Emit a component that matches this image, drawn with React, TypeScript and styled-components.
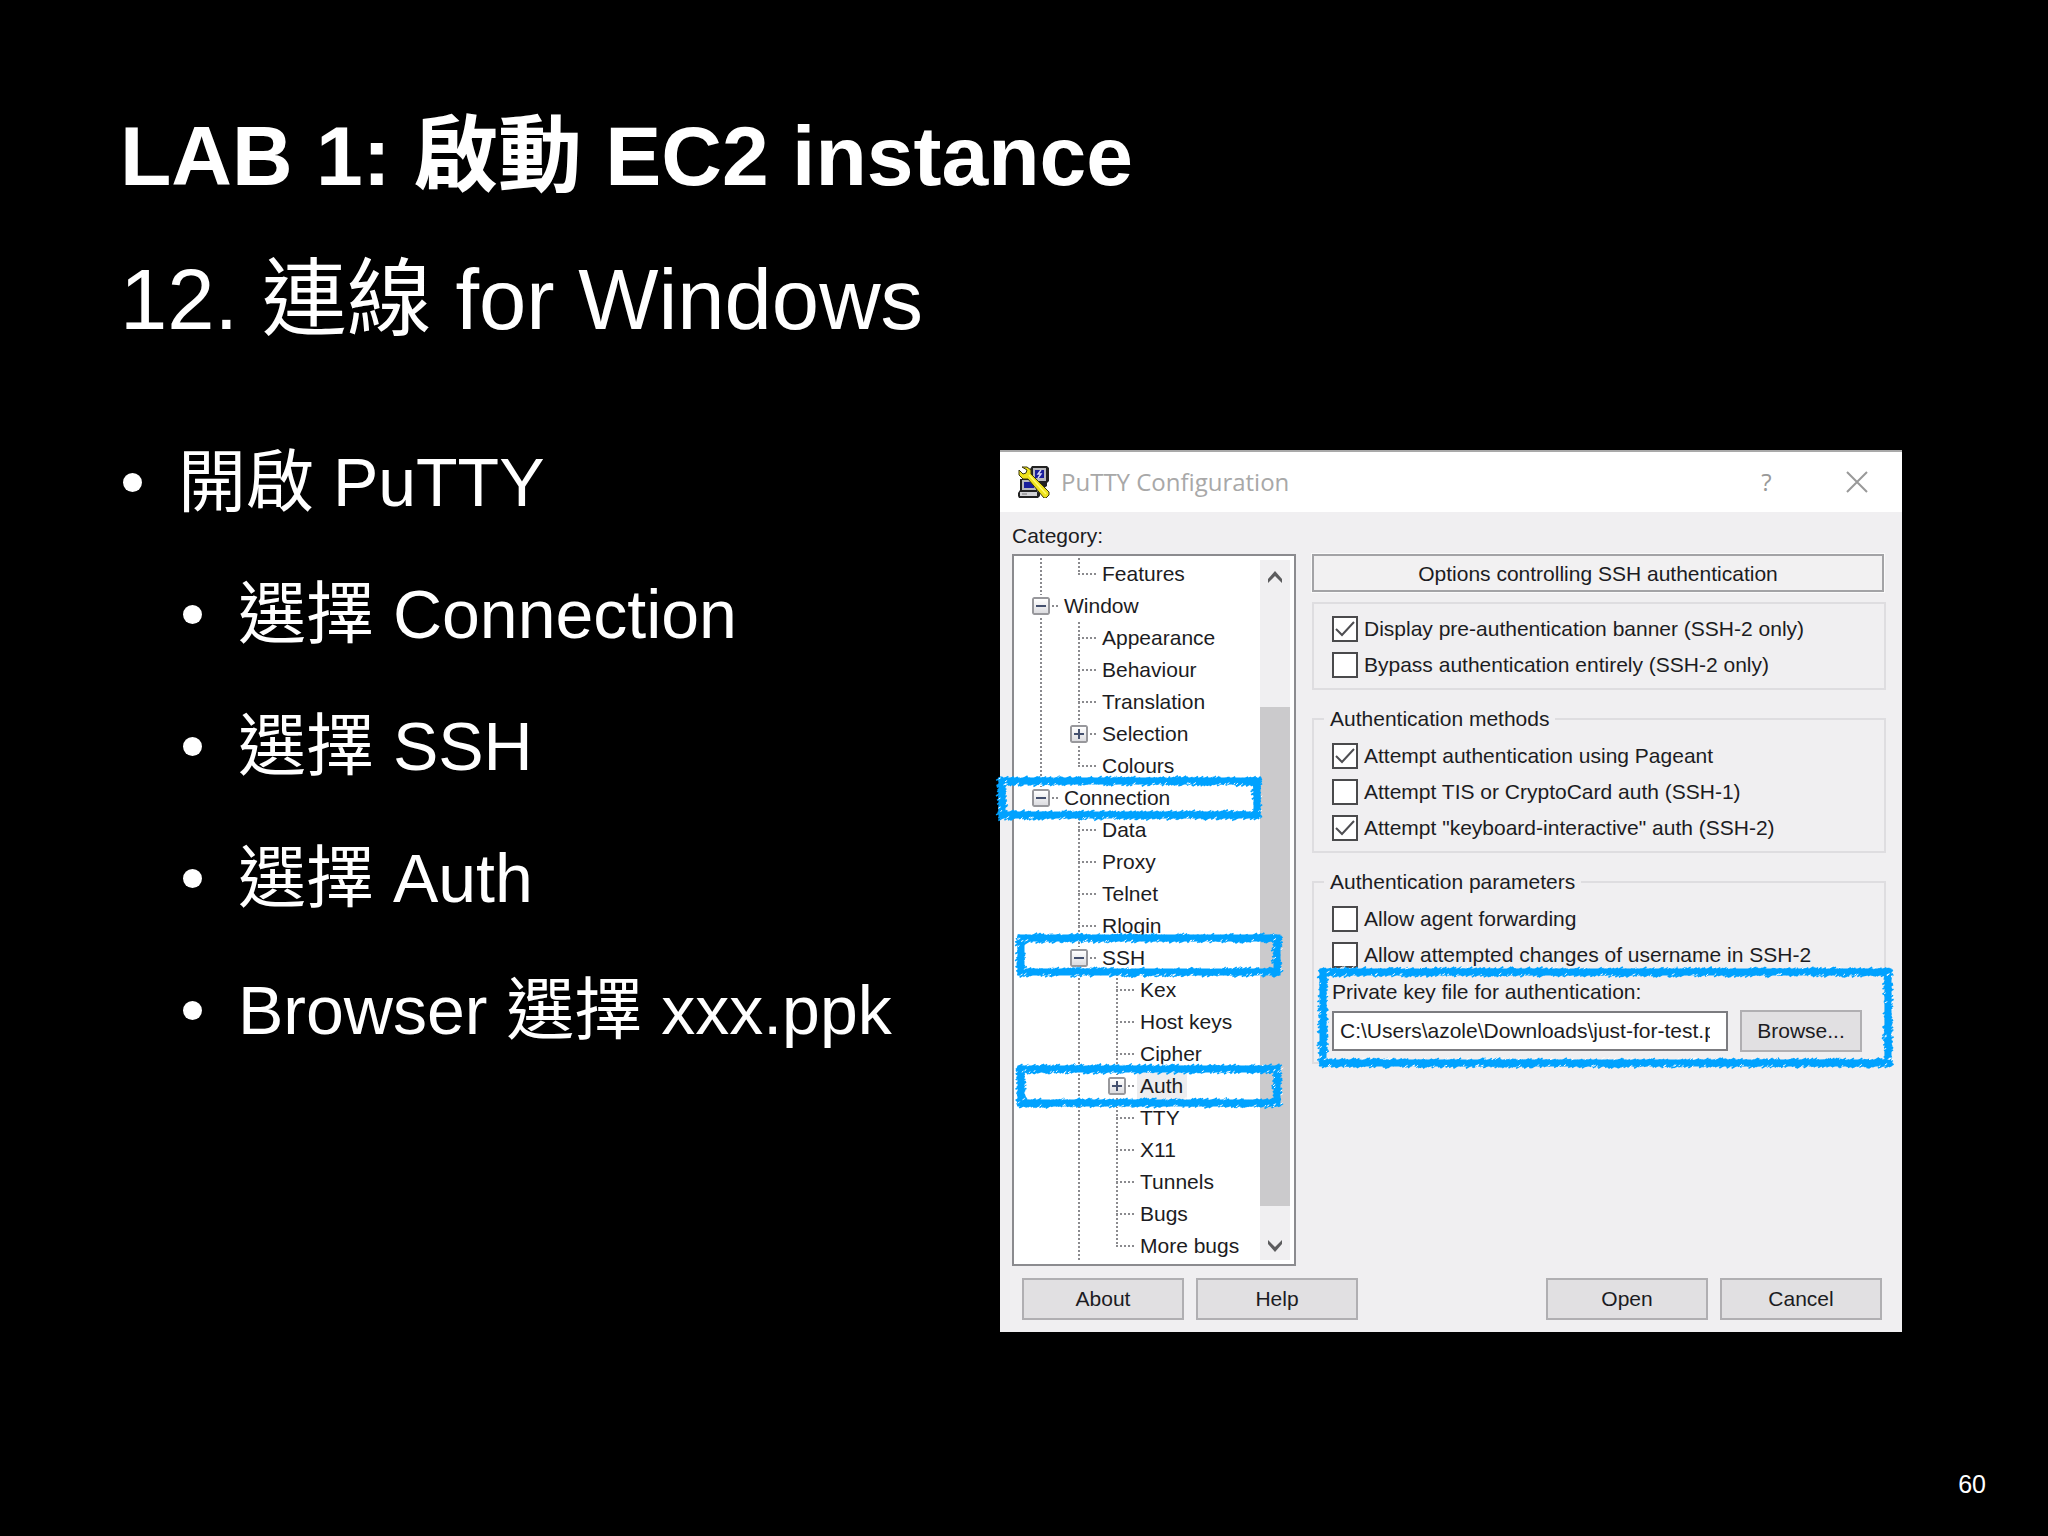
import React, { useId, useMemo } from "react";
import styled, { createGlobalStyle } from "styled-components";

const GlobalStyle = createGlobalStyle`
  *, *::before, *::after { box-sizing: border-box; }
  body {
    margin: 0;
    background: #000;
    color: #fff;
    font-family: "Liberation Sans", "Noto Sans CJK TC", sans-serif;
  }
  ul { list-style: none; margin: 0; padding: 0; }
`;

/* ---------- slide ---------- */

const Slide = styled.main`
  min-height: 100vh;
  display: flex;
  flex-direction: column;
  padding: 102px 62px 36px 120px;
`;

const Title = styled.h1`
  margin: 0;
  font-size: 84px;
  line-height: 108px;
  font-weight: 700;
`;

const Subtitle = styled.h2`
  margin: 36px 0 0;
  font-size: 85px;
  line-height: 108px;
  font-weight: 400;
`;

const Content = styled.div`
  display: grid;
  grid-template-columns: 880fr 902fr;
  align-items: start;
  padding: 96px 84px 0 0;
`;

const BulletList = styled.ul<{ $nested?: boolean }>`
  && { padding-left: ${(p) => (p.$nested ? 60 : 0)}px; }
  font-size: 68px;
  line-height: 132px;
  white-space: nowrap;
  margin-top: ${(p) => (p.$nested ? 0 : -34)}px;
`;

const BulletText = styled.div`
  display: flex;
  align-items: center;
  gap: 36px;
  &::before {
    content: "";
    flex: none;
    width: 19px;
    height: 19px;
    margin-left: 3px;
    border-radius: 50%;
    background: #fff;
  }
`;

const PageNumber = styled.footer`
  margin-top: auto;
  align-self: flex-end;
  font-size: 25px;
  line-height: 32px;
`;

/* ---------- dialog ---------- */

const Dialog = styled.section`
  display: flex;
  flex-direction: column;
  background: #f0eff1;
  color: #1c1c22;
  font-size: 21px;
  line-height: 24px;
  white-space: nowrap;
`;

const TitleBar = styled.header`
  display: flex;
  align-items: center;
  height: 62px;
  padding: 0 34px 0 18px;
  background: #fff;
  border-top: 2px solid #a9a9a9;
  color: #a8a8a8;
`;

const DialogTitle = styled.h3`
  flex: 1;
  margin: 0 0 0 11px;
  font: 400 24px/32px "Open Sans", "Noto Sans", sans-serif;
`;

const CaptionButton = styled.button`
  width: 91px;
  height: 40px;
  padding: 0;
  border: 0;
  background: none;
  color: #999;
  font: 400 24px/32px "Open Sans", "Noto Sans", sans-serif;
  display: flex;
  align-items: center;
  justify-content: center;
  &:last-child { width: 22px; margin-left: 34px; }
`;

const DialogBody = styled.div`
  padding: 12px 16px 12px 12px;
`;

const CategoryLabel = styled.div`
  height: 30px;
`;

const Panes = styled.div`
  display: grid;
  grid-template-columns: 284px minmax(0, 1fr);
  column-gap: 16px;
`;

const TreeFrame = styled.div`
  display: flex;
  height: 712px;
  padding: 2px 4px 2px 8px;
  border: 2px solid #8b8b8f;
  background: #fff;
`;

const TreeList = styled.ul`
  flex: 1;
  min-width: 0;
`;

const TreeRow = styled.li`
  position: relative;
  display: flex;
  align-items: center;
  height: 32px;
`;

const dotsDown = "repeating-linear-gradient(to bottom, #8a8a8e 0 2px, transparent 2px 4px)";
const dotsAcross = "repeating-linear-gradient(to right, #8a8a8e 0 2px, transparent 2px 4px)";

type CellKind = "blank" | "line" | "tee" | "end";

const GuideCell = styled.span<{ $kind: CellKind }>`
  flex: none;
  width: 38px;
  height: 32px;
  display: flex;
  align-items: center;
  justify-content: center;
  background:
    ${(p) => (p.$kind === "blank" ? "none" : dotsDown)} 18px 0 / 2px ${(p) => (p.$kind === "end" ? 16 : 32)}px no-repeat,
    ${(p) => (p.$kind === "tee" || p.$kind === "end" ? dotsAcross : "none")} 18px 15px / 18px 2px no-repeat;
`;

const Expander = styled.button`
  width: 18px;
  height: 18px;
  padding: 0;
  border: 2px solid #98989c;
  border-radius: 2px;
  background: linear-gradient(#fff, #dcdce0);
  outline: 2px solid #fff;
  display: flex;
  align-items: center;
  justify-content: center;
`;

const TreeText = styled.span<{ $selected?: boolean }>`
  margin-left: 1px;
  padding: 2px 4px 2px 3px;
  background: ${(p) => (p.$selected ? "#ededef" : "none")};
`;

const ScrollTrack = styled.div`
  width: 30px;
  margin: 2px 0;
  background: #f0eff1;
  display: flex;
  flex-direction: column;
`;

const ScrollButton = styled.button<{ $height: number }>`
  height: ${(p) => p.$height}px;
  padding: 0;
  border: 0;
  background: none;
  display: flex;
  align-items: center;
  justify-content: center;
`;

const ScrollThumb = styled.div`
  flex: 501;
  background: #cbcacc;
`;

const ScrollGap = styled.div<{ $grow: number }>`
  flex: ${(p) => p.$grow};
`;

const Settings = styled.div`
  display: flex;
  flex-direction: column;
`;

const PanelHeading = styled.div`
  margin: 0 2px 10px 0;
  height: 38px;
  border: 2px solid #a3a3a6;
  outline: 1px solid #fafafa;
  background: #f2f1f2;
  line-height: 36px;
  text-align: center;
`;

const Group = styled.fieldset`
  min-width: 0;
  margin: 0 0 17px;
  padding: 12px 18px 10px;
  border: 2px solid #dedde0;
`;

const Legend = styled.legend`
  margin-left: -8px;
  padding: 0 6px;
`;

const CheckLabel = styled.label`
  display: flex;
  align-items: center;
  gap: 6px;
  height: 26px;
  & + & { margin-top: 10px; }
`;

const CheckWrap = styled.span`
  position: relative;
  flex: none;
  width: 26px;
  height: 26px;
`;

const CheckInput = styled.input`
  appearance: none;
  display: block;
  width: 26px;
  height: 26px;
  margin: 0;
  border: 2px solid #4a4a4c;
  background: #fff;
  & + svg { position: absolute; inset: 0; pointer-events: none; display: none; }
  &:checked + svg { display: block; }
`;

const KeyFile = styled.div`
  position: relative;
  margin-top: 12px;
`;

const KeyLabel = styled.label`
  display: block;
  margin-bottom: 6px;
`;

const KeyRow = styled.div`
  display: flex;
  align-items: center;
  gap: 12px;
  padding-right: 4px;
`;

const KeyInput = styled.input`
  flex: 1;
  min-width: 0;
  height: 40px;
  padding: 0 16px 0 6px;
  border: 2px solid #7c7c80;
  background: #fff;
  color: inherit;
  font: inherit;
`;

const PushButton = styled.button<{ $width?: number }>`
  width: ${(p) => p.$width ?? 162}px;
  height: 42px;
  padding: 0;
  border: 2px solid #b0afb2;
  background: #e1e0e2;
  color: inherit;
  font: inherit;
`;

const Actions = styled.footer`
  display: flex;
  gap: 12px;
  padding: 12px 4px 0 10px;
`;

const Spacer = styled.div`
  flex: 1;
`;

/* ---------- crayon highlight ---------- */

const Mark = styled.svg<{ $top: number; $left: number; $right: number; $height: number }>`
  position: absolute;
  z-index: 2;
  top: ${(p) => p.$top}px;
  left: ${(p) => p.$left}px;
  width: calc(100% - ${(p) => p.$left + p.$right}px);
  height: ${(p) => p.$height}px;
  overflow: visible;
  pointer-events: none;
`;

function makeRandom(seed: number) {
  let s = seed;
  return () => {
    s = (s * 16807) % 2147483647;
    return s / 2147483647;
  };
}

function crayonPaths(w: number, h: number, seed: number) {
  const rnd = makeRandom(seed * 7919 + 13);
  let strokes = "";
  let specks = "";
  const hatch = (x: number, y: number, vertical: boolean) => {
    const across = (rnd() - 0.5) * 8;
    const len = 2 + rnd() * 3;
    const px = x + (vertical ? across : 0);
    const py = y + (vertical ? 0 : across);
    strokes += `M${(px - len / 2).toFixed(1)} ${(py + len / 3).toFixed(1)}l${len.toFixed(1)} ${(-len * 0.6).toFixed(1)}`;
    if (rnd() < 0.12) {
      const off = (rnd() < 0.5 ? -1 : 1) * (3 + rnd());
      const sx = x + (vertical ? off : 0);
      const sy = y + (vertical ? 0 : off);
      specks += `M${sx.toFixed(1)} ${sy.toFixed(1)}l${(1 + rnd() * 2).toFixed(1)} ${(-1 - rnd()).toFixed(1)}`;
    }
  };
  for (let x = 3; x < w - 2; x += 0.7) {
    hatch(x, 5, false);
    hatch(x, h - 5, false);
  }
  for (let y = 3; y < h - 2; y += 0.7) {
    hatch(5, y, true);
    hatch(w - 5, y, true);
  }
  return { strokes, specks };
}

type CrayonProps = { width: number; height: number; top: number; left: number; right: number; seed: number };

function CrayonBox({ width, height, top, left, right, seed }: CrayonProps) {
  const { strokes, specks } = useMemo(() => crayonPaths(width, height, seed), [width, height, seed]);
  return (
    <Mark
      $top={top}
      $left={left}
      $right={right}
      $height={height}
      viewBox={`0 0 ${width} ${height}`}
      preserveAspectRatio="none"
      aria-hidden="true"
    >
      <rect x="5" y="5" width={width - 10} height={height - 10} fill="none" stroke="#00a2ff" strokeWidth="7" />
      <path d={strokes} stroke="#00a2ff" strokeWidth="1.6" fill="none" />
      <path d={specks} stroke="#fff" strokeWidth="1" fill="none" />
    </Mark>
  );
}

/* ---------- icons ---------- */

function PuttyIcon() {
  return (
    <svg width="32" height="32" viewBox="0 0 32 32" aria-hidden="true">
      <path d="M14 0h15l2 2v13l-2 2v3l-3 2H12V3z" fill="#222" />
      <path d="M15 2h13v13H15z" fill="#b9b9bd" />
      <path d="M17 4h9v8H17z" fill="#1a1f9c" />
      <path d="M23 4l-3 4h3l-3 4" stroke="#d8d8f4" strokeWidth="1.4" fill="none" />
      <path d="M2 13h17v12l3 2v3l-2 2H1l-1-2v-3l2-3z" fill="#222" />
      <path d="M4 14h14v10H4z" fill="#b9b9bd" />
      <path d="M6 16h10v6H6z" fill="#1a1f9c" />
      <path d="M2 26h17v4H2z" fill="#d2d2d5" />
      <path d="M4 28h5" stroke="#777" strokeWidth="1" />
      <path
        d="M4 1h5l4 3v4l18 18v3l-3 3h-2L10 13H5L1 9V4l4 4l3-1l1-3z"
        fill="#eee21c"
        stroke="#3a370c"
        strokeWidth="1"
        strokeLinejoin="round"
      />
      <path d="M11 9l17 19" stroke="#fff870" strokeWidth="1.5" />
    </svg>
  );
}

const CloseIcon = () => (
  <svg width="22" height="22" viewBox="0 0 22 22" aria-hidden="true">
    <path d="M1 1l20 20M21 1L1 21" stroke="#999" strokeWidth="2" />
  </svg>
);

const Chevron = ({ down }: { down?: boolean }) => (
  <svg width="16" height="14" viewBox="0 0 16 14" aria-hidden="true">
    <path d={down ? "M1 1v4l7 8l7-8v-4l-7 7z" : "M1 13v-4l7-8l7 8v4l-7-7z"} fill="#5c5c5e" />
  </svg>
);

const ExpanderGlyph = ({ open }: { open: boolean }) => (
  <svg width="12" height="12" viewBox="0 0 12 12" aria-hidden="true">
    <path d={open ? "M1 6h10" : "M1 6h10M6 1v10"} stroke="#44506e" strokeWidth="2" />
  </svg>
);

/* ---------- data ---------- */

type TreeItem = {
  text: string;
  cells: CellKind[];
  expander?: "open" | "closed";
  selected?: boolean;
  mark?: CrayonProps;
};

const blankThen = (kind: CellKind): CellKind[] => ["blank", "line", kind];

const TREE: TreeItem[] = [
  { text: "Features", cells: ["line", "end"] },
  { text: "Window", cells: ["tee"], expander: "open" },
  { text: "Appearance", cells: ["line", "tee"] },
  { text: "Behaviour", cells: ["line", "tee"] },
  { text: "Translation", cells: ["line", "tee"] },
  { text: "Selection", cells: ["line", "tee"], expander: "closed" },
  { text: "Colours", cells: ["line", "end"] },
  {
    text: "Connection",
    cells: ["end"],
    expander: "open",
    mark: { width: 265, height: 44, top: -6, left: -25, right: -2, seed: 1 },
  },
  { text: "Data", cells: ["blank", "tee"] },
  { text: "Proxy", cells: ["blank", "tee"] },
  { text: "Telnet", cells: ["blank", "tee"] },
  { text: "Rlogin", cells: ["blank", "tee"] },
  {
    text: "SSH",
    cells: ["blank", "tee"],
    expander: "open",
    mark: { width: 266, height: 44, top: -9, left: -6, right: -22, seed: 2 },
  },
  { text: "Kex", cells: blankThen("tee") },
  { text: "Host keys", cells: blankThen("tee") },
  { text: "Cipher", cells: blankThen("tee") },
  {
    text: "Auth",
    cells: blankThen("tee"),
    expander: "closed",
    selected: true,
    mark: { width: 266, height: 44, top: -6, left: -6, right: -22, seed: 3 },
  },
  { text: "TTY", cells: blankThen("tee") },
  { text: "X11", cells: blankThen("tee") },
  { text: "Tunnels", cells: blankThen("tee") },
  { text: "Bugs", cells: blankThen("tee") },
  { text: "More bugs", cells: blankThen("end") },
];

const STEPS = ["選擇 Connection", "選擇 SSH", "選擇 Auth", "Browser 選擇 xxx.ppk"];

/* ---------- parts ---------- */

function Check({ text, checked }: { text: string; checked?: boolean }) {
  return (
    <CheckLabel>
      <CheckWrap>
        <CheckInput type="checkbox" defaultChecked={checked} />
        <svg width="26" height="26" viewBox="0 0 26 26" aria-hidden="true">
          <path d="M4 13l6 6L22 6" stroke="#4e4e52" strokeWidth="2" fill="none" />
        </svg>
      </CheckWrap>
      {text}
    </CheckLabel>
  );
}

function Tree() {
  return (
    <TreeFrame>
      <TreeList aria-label="Category">
        {TREE.map((item) => (
          <TreeRow key={item.text}>
            {item.cells.map((kind, i) => (
              <GuideCell key={i} $kind={kind}>
                {item.expander && i === item.cells.length - 1 && (
                  <Expander type="button" aria-label={`Toggle ${item.text}`}>
                    <ExpanderGlyph open={item.expander === "open"} />
                  </Expander>
                )}
              </GuideCell>
            ))}
            <TreeText $selected={item.selected}>{item.text}</TreeText>
            {item.mark && <CrayonBox {...item.mark} />}
          </TreeRow>
        ))}
      </TreeList>
      <ScrollTrack>
        <ScrollButton type="button" aria-label="Scroll up" $height={34}>
          <Chevron />
        </ScrollButton>
        <ScrollGap $grow={113} />
        <ScrollThumb />
        <ScrollGap $grow={26} />
        <ScrollButton type="button" aria-label="Scroll down" $height={28}>
          <Chevron down />
        </ScrollButton>
      </ScrollTrack>
    </TreeFrame>
  );
}

function PuttyDialog() {
  const keyId = useId();
  return (
    <Dialog aria-label="PuTTY Configuration">
      <TitleBar>
        <PuttyIcon />
        <DialogTitle>PuTTY Configuration</DialogTitle>
        <CaptionButton type="button">?</CaptionButton>
        <CaptionButton type="button" aria-label="Close">
          <CloseIcon />
        </CaptionButton>
      </TitleBar>
      <DialogBody>
        <CategoryLabel>Category:</CategoryLabel>
        <Panes>
          <Tree />
          <Settings>
            <PanelHeading>Options controlling SSH authentication</PanelHeading>
            <Group>
              <Check text="Display pre-authentication banner (SSH-2 only)" checked />
              <Check text="Bypass authentication entirely (SSH-2 only)" />
            </Group>
            <Group>
              <Legend>Authentication methods</Legend>
              <Check text="Attempt authentication using Pageant" checked />
              <Check text="Attempt TIS or CryptoCard auth (SSH-1)" />
              <Check text={'Attempt "keyboard-interactive" auth (SSH-2)'} checked />
            </Group>
            <Group>
              <Legend>Authentication parameters</Legend>
              <Check text="Allow agent forwarding" />
              <Check text="Allow attempted changes of username in SSH-2" />
              <KeyFile>
                <KeyLabel htmlFor={keyId}>Private key file for authentication:</KeyLabel>
                <KeyRow>
                  <KeyInput id={keyId} defaultValue="C:\Users\azole\Downloads\just-for-test.ppk" />
                  <PushButton type="button" $width={122}>
                    Browse...
                  </PushButton>
                </KeyRow>
                <CrayonBox width={575} height={101} top={-13} left={-14} right={-27} seed={4} />
              </KeyFile>
            </Group>
          </Settings>
        </Panes>
        <Actions>
          <PushButton type="button">About</PushButton>
          <PushButton type="button">Help</PushButton>
          <Spacer />
          <PushButton type="button">Open</PushButton>
          <PushButton type="button">Cancel</PushButton>
        </Actions>
      </DialogBody>
    </Dialog>
  );
}

export default function App() {
  return (
    <>
      <GlobalStyle />
      <Slide>
        <Title>LAB 1: 啟動 EC2 instance</Title>
        <Subtitle>12. 連線 for Windows</Subtitle>
        <Content>
          <BulletList>
            <li>
              <BulletText>開啟 PuTTY</BulletText>
              <BulletList $nested>
                {STEPS.map((step) => (
                  <li key={step}>
                    <BulletText>{step}</BulletText>
                  </li>
                ))}
              </BulletList>
            </li>
          </BulletList>
          <PuttyDialog />
        </Content>
        <PageNumber>60</PageNumber>
      </Slide>
    </>
  );
}
